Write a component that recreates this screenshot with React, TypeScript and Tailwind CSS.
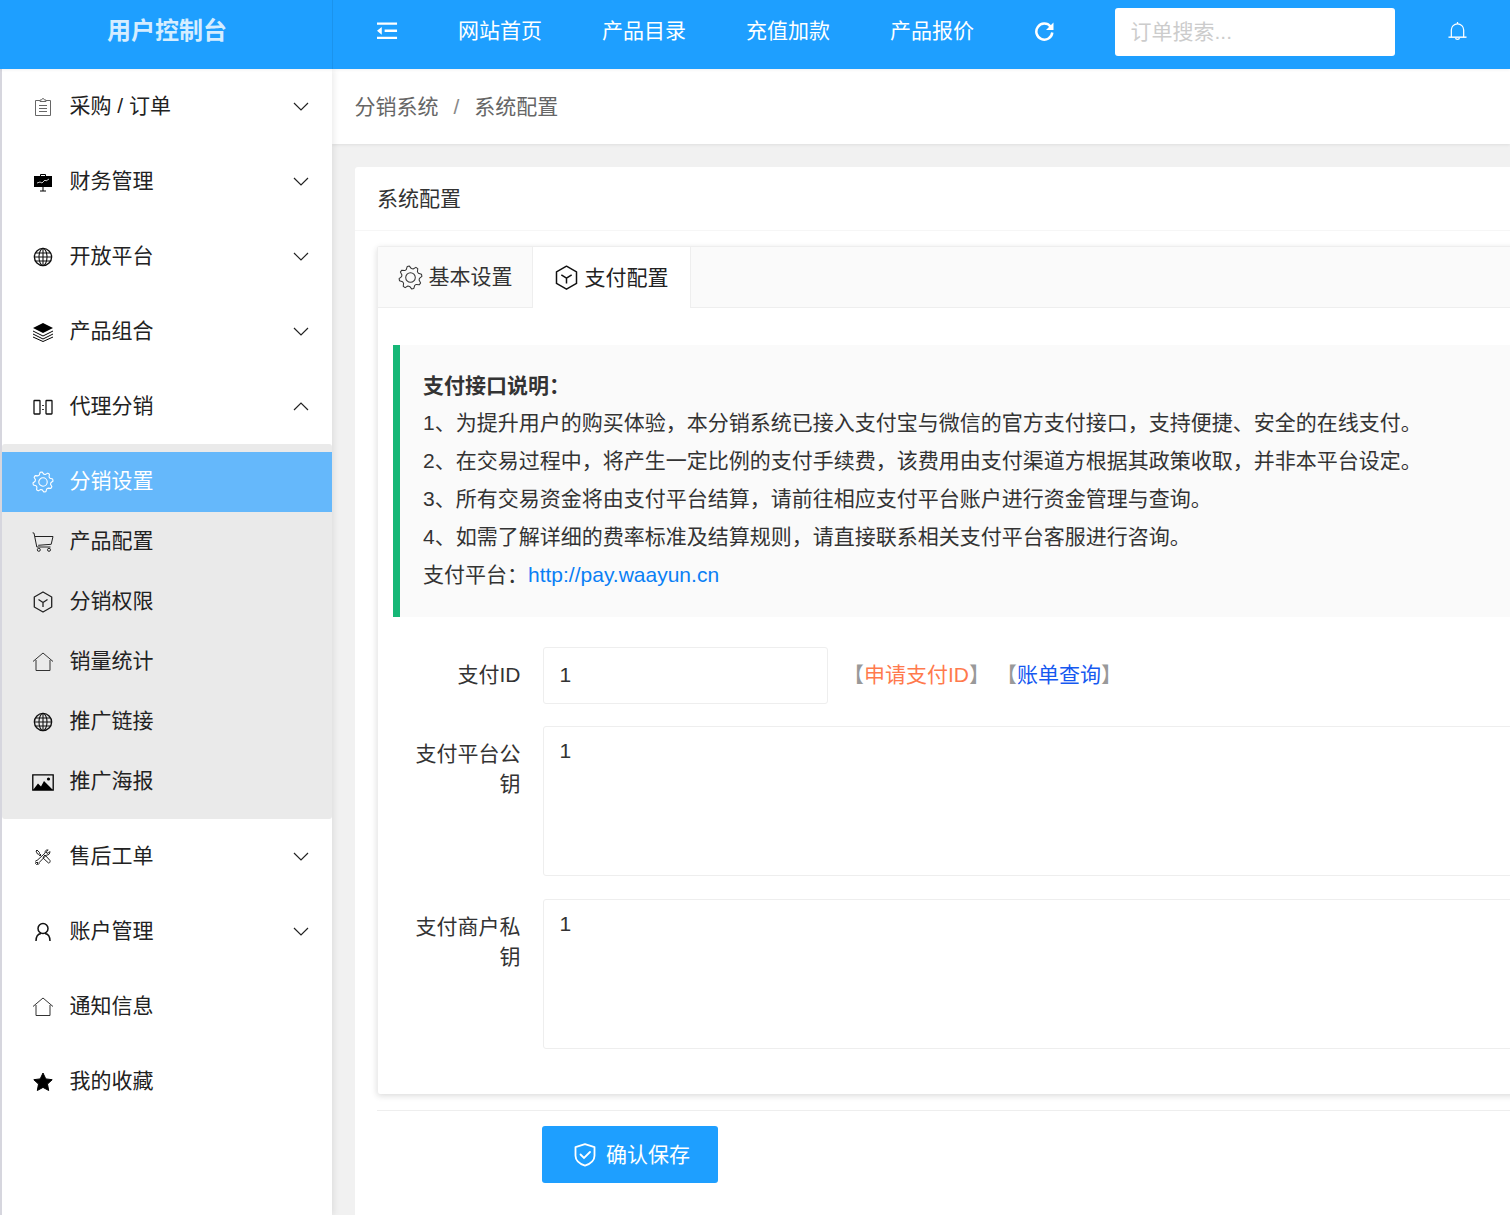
import type {ReactNode} from "react";

const font = "font-['Liberation_Sans','Noto_Sans_CJK_SC',sans-serif]";

// 8 toothed outline for the gear icon
const gearPath = Array.from({length: 32}, (_, i) => {
    const a = ((i - 1.5) * Math.PI) / 16;
    const r = i % 4 === 0 || i % 4 === 1 ? 11 : 8.6;
    return `${i === 0 ? "M" : "L"}${(12 + r * Math.cos(a)).toFixed(2)} ${(12 + r * Math.sin(a)).toFixed(2)}`;
}).join("") + "z";

const Gear = ({size, color, width}: {size: number; color: string; width: number}) => (
    <svg viewBox="0 0 24 24" width={size} height={size} fill="none" stroke={color} strokeWidth={width} strokeLinejoin="round">
        <path d={gearPath}/>
        <circle cx="12" cy="12" r="4.600"/>
    </svg>
);
const Cube = ({size, color, width}: {size: number; color: string; width: number}) => (
    <svg viewBox="0 0 20 22" width={size} height={size * 1.1} fill="none" stroke={color} strokeWidth={width} strokeLinejoin="round">
        <path d="M10 1l8.700 5v10L10 21l-8.700-5V6z"/>
        <path d="M5.500 8.500l4.500 3 4.500-3M10 11.500V16"/>
    </svg>
);
const Cart = () => (
    <svg viewBox="0 0 22 20" className="w-[22px] h-[20px]" fill="none" stroke="#222" strokeWidth="1">
        <path d="M.6 .8l1.400 .3 2.800 13.900h13.700"/>
        <path d="M3 4.500h18l-1.800 7.800-13 1"/>
        <circle cx="6.800" cy="17.800" r="1.500"/>
        <circle cx="17" cy="17.800" r="1.500"/>
    </svg>
);
const Chevron = ({up}: {up?: boolean}) => (
    <svg viewBox="0 0 16 9" className={up ? "w-[16px] h-[9px] rotate-180" : "w-[16px] h-[9px]"} fill="none" stroke="#222" strokeWidth="1.200">
        <path d="M1 1l7 7 7-7"/>
    </svg>
);
const Clipboard = () => (
    <svg viewBox="0 0 20 20" className="w-[20px] h-[20px]" fill="none" stroke="#666" strokeWidth="1">
        <path d="M7 3.500H2.500v15h15v-15H13"/>
        <path d="M7 4.500V3h1.500l1-1.500h1l1 1.500H13v1.500z"/>
        <path d="M6 8.500h8M6 11.500h8M6 14.500h8"/>
    </svg>
);
const Screen = () => (
    <svg viewBox="0 0 20 20" className="w-[20px] h-[20px]">
        <path d="M1 4h18v11H1z" fill="#000"/>
        <path d="M7.500 4V2.500h5V4" fill="none" stroke="#000"/>
        <path d="M10 15v4M7 19h6" stroke="#000" strokeWidth="1"/>
        <path d="M4 11l3-1 2 1 3-3 1 1 3-2" fill="none" stroke="#fff" strokeWidth=".8"/>
    </svg>
);
const Globe = () => (
    <svg viewBox="0 0 20 20" className="w-[20px] h-[20px]" fill="none" stroke="#111" strokeWidth="1.100">
        <circle cx="10" cy="10" r="8.600" strokeWidth="1.400"/>
        <ellipse cx="10" cy="10" rx="4" ry="8.600"/>
        <path d="M10 1.400v17.200M1.400 10h17.200M2.500 6h15M2.500 14h15"/>
    </svg>
);
const Layers = () => (
    <svg viewBox="0 0 22 20" className="w-[22px] h-[20px]">
        <path d="M11 1l10 5-10 5L1 6z" fill="#000"/>
        <path d="M1 9l10 5 10-5M1 12l10 5 10-5M1 15l10 4.500 10-4.500" fill="none" stroke="#000" strokeWidth="1"/>
    </svg>
);
const Split = () => (
    <svg viewBox="0 0 20 20" className="w-[20px] h-[20px]" fill="none" stroke="#111" strokeWidth="1.300">
        <rect x="1" y="3.500" width="6" height="13.500" rx=".5"/>
        <rect x="13" y="3.500" width="6" height="13.500" rx=".5"/>
        <path d="M10 8v1M10 12v1" strokeWidth="1.600"/>
    </svg>
);
const Home = () => (
    <svg viewBox="0 0 22 20" className="w-[22px] h-[20px]" fill="none" stroke="#333" strokeWidth="1">
        <path d="M1 9.500L11 1l10 8.500"/>
        <path d="M4 8v10.500h14V8"/>
    </svg>
);
const Picture = () => (
    <svg viewBox="0 0 22 20" className="w-[22px] h-[20px]">
        <path d="M.8 2.800h20.400v15.400H.8z" fill="none" stroke="#000" strokeWidth="1.300"/>
        <path d="M1 18l5-6.500 3 3 3-5.500 9 9z" fill="#000"/>
        <circle cx="16.500" cy="7" r="1.600" fill="#000"/>
    </svg>
);
const Tools = () => (
    <svg viewBox="0 0 16 16" className="w-[16px] h-[16px]" fill="none" stroke="#222" strokeWidth="1">
        <path d="M1 2l1-1 2.500 2.500v1l1.500 1.500-1 1L3.500 5h-1z"/>
        <path d="M9 7l1-1 5 5.500c.5 1-.5 3-1.500 2.500L8 9z"/>
        <path d="M14.800 2.500L13 4.300l-1.300-.3-.3-1.300L13.200 1c-2-.5-3.500 1-3 3L2 11.500c-1.800-.3-2.500 1.500-1.500 3L2 13l1 1-1.500 1.500c1.500.5 3-.5 2.700-2L11.500 6c2 .5 3.800-1.500 3.300-3.500z"/>
    </svg>
);
const User = () => (
    <svg viewBox="0 0 20 20" className="w-[20px] h-[20px]" fill="none" stroke="#111" strokeWidth="1.500">
        <circle cx="10" cy="6.500" r="5"/>
        <path d="M3 19c0-4 2-7 5-7.500M17 19c0-4-2-7-5-7.500"/>
    </svg>
);
const Star = () => (
    <svg viewBox="0 0 20 20" className="w-[20px] h-[20px]">
        <path d="M10 1l2.800 5.900 6.400.800-4.700 4.400 1.200 6.400L10 15.400l-5.700 3.100 1.200-6.400L.8 7.700l6.400-.800z" fill="#000" stroke="#000" strokeLinejoin="round"/>
    </svg>
);
const Fold = () => (
    <svg viewBox="0 0 22 18" className="w-[21px] h-[18px]" fill="#fff">
        <path d="M0 0h21v2.500H0zM8 7.500h13V10H8zM0 15h21v2.500H0zM5 4.800v8L0 8.800z"/>
    </svg>
);
const Refresh = () => (
    <svg viewBox="0 0 20 20" className="w-[20px] h-[20px]" fill="none" stroke="#fff" strokeWidth="2.500">
        <path d="M16.500 5.500a8 8 0 1 0 1.800 6"/>
        <path d="M19.500 1.500v7.500h-7.500z" fill="#fff" stroke="none"/>
    </svg>
);
const Bell = () => (
    <svg viewBox="0 0 20 20" className="w-[19px] h-[20px]" fill="none" stroke="#fff" strokeWidth="1.300">
        <path d="M3.500 16.500V9a6.500 6.500 0 0 1 13 0v7.500"/>
        <path d="M.5 16.500h19" strokeWidth="1.500"/>
        <path d="M10 .5v2M8 17c0 2.500 4 2.500 4 0"/>
    </svg>
);
const Shield = () => (
    <svg viewBox="0 0 22 24" className="w-[22px] h-[24px]" fill="none" stroke="#fff" strokeWidth="1.800">
        <path d="M11 1.200l9.500 3v8.500c0 4.500-4 8-9.500 10-5.500-2-9.500-5.500-9.500-10V4.200z" strokeLinejoin="round"/>
        <path d="M6.500 11.500l3.500 3.500 6-6" strokeLinecap="round"/>
    </svg>
);

type MenuItem = {icon: ReactNode; label: string; arrow?: boolean};

const Row = ({icon, label, arrow}: MenuItem) => (
    <div className="flex items-center h-[75px] pl-[29.5px] pr-[23px] text-[#222]">
        <span className="flex items-center justify-center w-[22px]">{icon}</span>
        <span className="ml-[16px] flex-1 pb-[2px]">{label}</span>
        {arrow && <Chevron/>}
    </div>
);

const SubRow = ({icon, label, active}: MenuItem & {active?: boolean}) => (
    <div className={active
        ? "flex items-center h-[60px] pl-[29.5px] bg-[#65b8fb] text-white"
        : "flex items-center h-[60px] pl-[29.5px] text-[#222]"}>
        <span className="flex items-center justify-center w-[22px]">{icon}</span>
        <span className="ml-[16px] pb-[2px]">{label}</span>
    </div>
);

function Sidebar() {
    return (
        <aside className="w-[332px] shrink-0 border-l-2 border-[#d6d6de] bg-white shadow-[2px_0_6px_rgba(0,0,0,0.08)] z-10 text-[21px]">
            <Row icon={<Clipboard/>} label="采购 / 订单" arrow/>
            <Row icon={<Screen/>} label="财务管理" arrow/>
            <Row icon={<Globe/>} label="开放平台" arrow/>
            <Row icon={<Layers/>} label="产品组合" arrow/>
            <div className="flex items-center h-[75px] pl-[29.5px] pr-[23px] text-[#222]">
                <span className="flex items-center justify-center w-[22px]"><Split/></span>
                <span className="ml-[16px] flex-1 pb-[2px]">代理分销</span>
                <Chevron up/>
            </div>
            <div className="bg-[#eaeaea] rounded-[3px] pt-[8px] pb-[7px]">
                <SubRow active icon={<Gear size={24} color="#fff" width={1.200}/>} label="分销设置"/>
                <SubRow icon={<Cart/>} label="产品配置"/>
                <SubRow icon={<Cube size={20} color="#222" width={1.300}/>} label="分销权限"/>
                <SubRow icon={<Home/>} label="销量统计"/>
                <SubRow icon={<Globe/>} label="推广链接"/>
                <SubRow icon={<Picture/>} label="推广海报"/>
            </div>
            <Row icon={<Tools/>} label="售后工单" arrow/>
            <Row icon={<User/>} label="账户管理" arrow/>
            <Row icon={<Home/>} label="通知信息"/>
            <Row icon={<Star/>} label="我的收藏"/>
        </aside>
    );
}

function Header() {
    return (
        <header className="h-[69px] shrink-0 pl-[2px] flex items-center bg-[#1e9fff] text-white text-[21px] z-20 shadow-[0_1px_3px_rgba(0,0,0,0.06)]">
            <div className="w-[331px] h-full pb-[7px] flex items-center justify-center border-r border-[#1b93ec] text-[24px] font-bold text-[#d5edff]">
                用户控制台
            </div>
            <nav className="flex items-center gap-[60px] pl-[44px] mb-[7px]">
                <Fold/>
                <span>网站首页</span>
                <span>产品目录</span>
                <span>充值加款</span>
                <span>产品报价</span>
                <Refresh/>
            </nav>
            <input
                placeholder="订单搜索..."
                className="ml-[61px] mb-[5px] w-[280px] h-[48px] pl-[15.5px] pr-[16px] rounded-[3px] bg-white text-[21px] placeholder:text-[#cccccc] outline-none"
            />
            <span className="ml-[53px] mb-[7px]"><Bell/></span>
        </header>
    );
}

function Notice() {
    return (
        <div className="mt-[37px] ml-[15px] pt-[21px] pb-[23px] pl-[23px] border-l-[7px] border-[#16b777] bg-[#fafafa] text-[#333] leading-[38px] whitespace-nowrap">
            <div className="font-bold h-[38px] leading-[40px]">支付接口说明：</div>
            <div>1、为提升用户的购买体验，本分销系统已接入支付宝与微信的官方支付接口，支持便捷、安全的在线支付。</div>
            <div>2、在交易过程中，将产生一定比例的支付手续费，该费用由支付渠道方根据其政策收取，并非本平台设定。</div>
            <div>3、所有交易资金将由支付平台结算，请前往相应支付平台账户进行资金管理与查询。</div>
            <div>4、如需了解详细的费率标准及结算规则，请直接联系相关支付平台客服进行咨询。</div>
            <div>支付平台：<span className="text-[#0a7ff5]">http://pay.waayun.cn</span></div>
        </div>
    );
}

const Area = ({label, first}: {label: ReactNode; first?: boolean}) => (
    <div className={first ? "flex mt-[22px]" : "flex mt-[23px]"}>
        <label className="w-[165px] shrink-0 pl-[22px] pr-[22.5px] pt-[13px] text-right leading-[30px] text-[#333]">{label}</label>
        <textarea
            defaultValue="1"
            className="flex-1 h-[150px] pl-[15.5px] pr-[16px] py-[9px] border border-[#eeeeee] rounded-[3px] bg-white text-[#333] leading-[30px] outline-none resize-none"
        />
    </div>
);

function Panel() {
    return (
        <main className="flex-1 min-w-0 bg-[#f1f1f1] flex flex-col">
            <div className="h-[75px] shrink-0 flex items-center pl-[22.5px] bg-white text-[21px] text-[#666] shadow-[0_1px_3px_rgba(0,0,0,0.08)]">
                <span>分销系统</span>
                <span className="mx-[15px] text-[#888]">/</span>
                <span>系统配置</span>
            </div>
            <section className="flex-1 mt-[23px] ml-[23px] bg-white rounded-tl-[3px] text-[21px]">
                <div className="h-[64px] flex items-center pl-[22px] border-b border-[#f6f6f6] text-[#333]">系统配置</div>
                <div className="mt-[15px] ml-[22px] -mr-[30px] h-[848px] bg-white rounded-[3px] border-t border-l border-[#eeeeee] shadow-[0_2px_6px_rgba(0,0,0,0.14)]">
                    <div className="flex h-[61px] bg-[#fafafa] border-b border-[#eeeeee]">
                        <div className="w-[155px] flex items-center justify-center gap-[6px] border-r border-[#eeeeee] text-[#333]">
                            <Gear size={25} color="#333" width={1}/>
                            <span>基本设置</span>
                        </div>
                        <div className="w-[158px] h-[61px] flex items-center justify-center gap-[7px] bg-white border-r border-[#eeeeee] text-[#222]">
                            <Cube size={23} color="#111" width={1.300}/>
                            <span>支付配置</span>
                        </div>
                    </div>
                    <Notice/>
                    <div className="flex items-center mt-[30px]">
                        <label className="w-[165px] shrink-0 pr-[22.5px] pb-[2px] text-right text-[#333]">支付ID</label>
                        <input
                            defaultValue="1"
                            className="w-[285px] h-[57px] pl-[15.5px] pr-[16px] pb-[2px] border border-[#eeeeee] rounded-[3px] bg-white text-[#333] outline-none"
                        />
                        <span className="ml-[15px] pb-[2px] whitespace-nowrap">
                            <span className="text-[#999]">【</span><span className="text-[#ff7a4d]">申请支付ID</span><span className="text-[#999]">】</span>
                        </span>
                        <span className="ml-[6px] pb-[2px] whitespace-nowrap">
                            <span className="text-[#999]">【</span><span className="text-[#1659f0]">账单查询</span><span className="text-[#999]">】</span>
                        </span>
                    </div>
                    <Area first label="支付平台公钥"/>
                    <Area label="支付商户私钥"/>
                </div>
                <div className="mt-[16px] ml-[22px] pt-[15px] border-t border-[#eeeeee]">
                    <button className="ml-[165px] w-[176px] h-[57px] pl-[4px] flex items-center justify-center gap-[10px] rounded-[3px] bg-[#1e9fff] text-white">
                        <Shield/>
                        确认保存
                    </button>
                </div>
            </section>
        </main>
    );
}

export default function App() {
    return (
        <div className={`${font} w-[1510px] h-[1215px] overflow-hidden flex flex-col bg-white`}>
            <Header/>
            <div className="flex flex-1 min-h-0">
                <Sidebar/>
                <Panel/>
            </div>
        </div>
    );
}
